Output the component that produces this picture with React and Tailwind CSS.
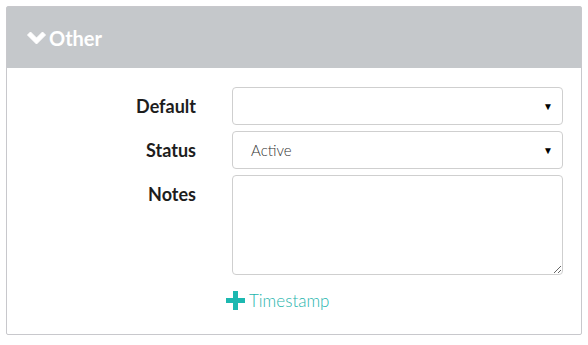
const Row = ({ label, children }) => (
  <div className="flex items-start">
    <div className="w-[189px] shrink-0 text-right text-[18px] font-bold text-[#1d1d1d] leading-[38px]">{label}</div>
    <div className="ml-[36px] w-[331px]">{children}</div>
  </div>
);

const FakeSelect = ({ value }) => (
  <div className="flex h-[38px] items-center justify-between rounded-[4px] border border-[#cfcfcf] bg-white pl-[18px] pr-[9px] text-[15px] font-light text-[#333]">
    <span>{value}</span>
    <span className="text-[10px] text-black">▼</span>
  </div>
);

export default function App() {
  return (
    <div className="min-h-[345px] bg-white p-[6px] font-['Lato',sans-serif]">
      <div className="rounded-[2px] border border-[#c8c8cc] bg-white">
        <div className="flex h-[61px] items-center gap-[3px] bg-[#c5c8cb] pl-[20px] text-[20px] font-bold text-white">
          <svg width="19" height="14" viewBox="0 0 19 14">
            <path d="M0.5 4 L3.5 1 L9.5 7 L15.5 1 L18.5 4 L9.5 13 Z" fill="white" strokeLinejoin="round" stroke="white" strokeWidth="1" />
          </svg>
          <span>Other</span>
        </div>
        <div className="flex flex-col gap-[6px] pt-[19px] pb-[20px]">
          <Row label="Default"><FakeSelect value="" /></Row>
          <Row label="Status"><FakeSelect value="Active" /></Row>
          <Row label="Notes">
            <textarea className="block h-[100px] w-full rounded-[4px] border border-[#cfcfcf] bg-white" />
          </Row>
          <div className="mt-[7px] flex items-center pl-[219px] text-[17px] font-light text-[#1fb5ad]">
            <svg width="19" height="19" viewBox="0 0 19 19" className="mr-[4px]">
              <rect x="7" y="0" width="5" height="19" fill="#1cb8b0" />
              <rect x="0" y="7" width="19" height="5" fill="#1cb8b0" />
            </svg>
            <span>Timestamp</span>
          </div>
        </div>
      </div>
    </div>
  );
}
